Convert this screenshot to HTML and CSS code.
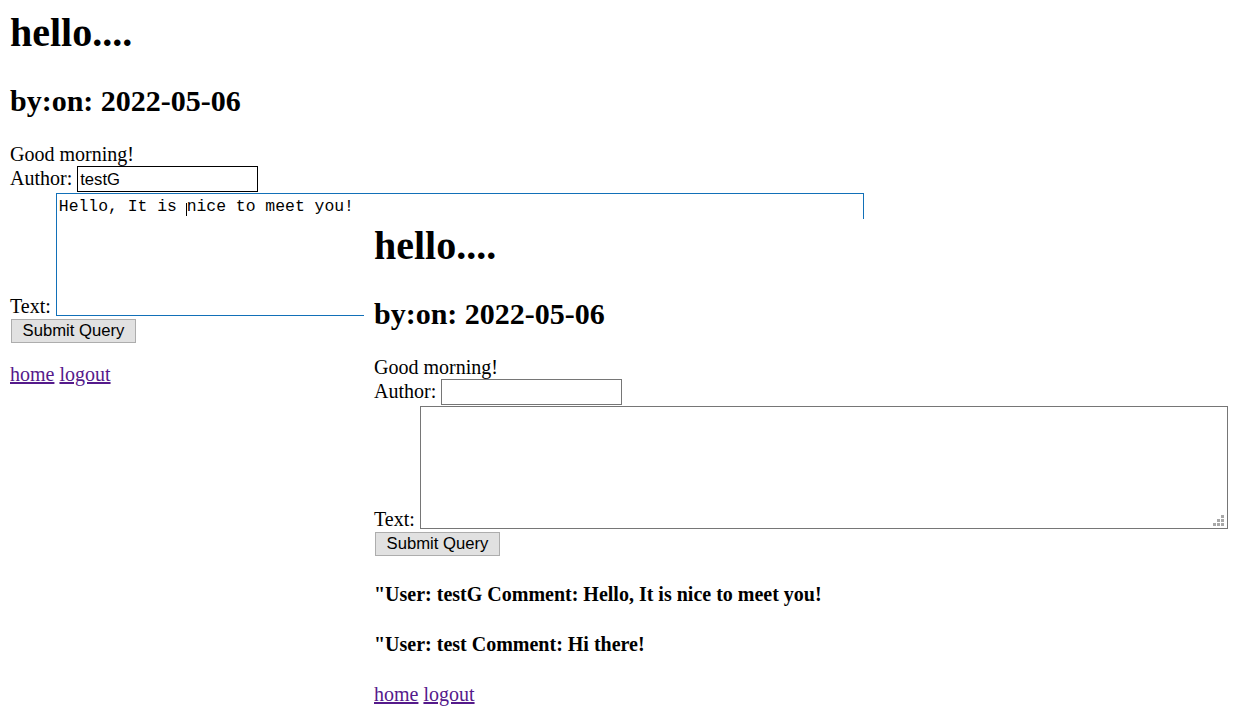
FILE: index.html
```html
<!DOCTYPE html>
<html>
<head>
<meta charset="utf-8">
<title>hello</title>
<link rel="stylesheet" href="styles.css">
</head>
<body>
<div class="win win-back">
  <div class="page page-back">
    <h1 class="title">hello....</h1>
    <h2 class="byline">by:on: 2022-05-06</h2>
    <form class="form">
      Good morning!<br>
      Author: <input class="field field-focus" type="text" value="testG"><br>
      Text: <span class="ta-wrap"><textarea class="area area-focus">Hello, It is nice to meet you!</textarea><span class="caret"></span></span><br>
      <button type="button" class="btn">Submit Query</button>
    </form>
    <p class="nav"><a href="#" class="link">home</a> <a href="#" class="link">logout</a></p>
  </div>
</div>
<div class="win win-front">
  <div class="page page-front">
    <h1 class="title">hello....</h1>
    <h2 class="byline">by:on: 2022-05-06</h2>
    <form class="form">
      Good morning!<br>
      Author: <input class="field" type="text" value=""><br>
      Text: <span class="ta-wrap"><textarea class="area"></textarea><svg class="grip" width="11" height="11" viewBox="0 0 11 11"><rect x="8" y="0" width="3" height="3"/><rect x="4" y="4" width="3" height="3"/><rect x="8" y="4" width="3" height="3"/><rect x="0" y="8" width="3" height="3"/><rect x="4" y="8" width="3" height="3"/><rect x="8" y="8" width="3" height="3"/></svg></span><br>
      <button type="button" class="btn">Submit Query</button>
    </form>
    <h4 class="comment">"User: testG Comment: Hello, It is nice to meet you!</h4>
    <h4 class="comment">"User: test Comment: Hi there!</h4>
    <p class="nav"><a href="#" class="link">home</a> <a href="#" class="link">logout</a></p>
  </div>
</div>
</body>
</html>
```
FILE: styles.css
```css
html, body {
  margin: 0;
  padding: 0;
  background: #fff;
}
body {
  position: relative;
  width: 1239px;
  height: 726px;
  overflow: hidden;
  font-family: "Liberation Serif", "Times New Roman", serif;
  font-size: 20px;
  line-height: 23px;
  color: #000;
}
.win {
  background: #fff;
  overflow: hidden;
  padding: 0 10px;
}
.win-back {
  height: 726px;
}
.win-front {
  position: absolute;
  left: 364px;
  top: 219px;
  right: 0;
  bottom: 0;
}
.page {
  display: flow-root;
}
.page-back {
  margin-top: -17px;
}
.page-front {
  margin-top: -23px;
}
.title {
  font-size: 40px;
  line-height: 46px;
  font-weight: bold;
  margin: 27px 0;
}
.byline {
  font-size: 30px;
  line-height: 35px;
  font-weight: bold;
  margin: 25px 0;
}
.form {
  margin: 0;
}
.field {
  box-sizing: border-box;
  width: 181px;
  height: 26px;
  margin: 0 0 1px;
  padding: 2px 2px 1px;
  border: 1px solid #767676;
  font-family: "Liberation Sans", Arial, sans-serif;
  font-size: 16.67px;
  color: #000;
  background: #fff;
  outline: none;
  vertical-align: baseline;
}
.field-focus {
  border-color: #000;
}
.ta-wrap {
  position: relative;
  display: inline-block;
  vertical-align: -3px;
}
.area {
  display: block;
  box-sizing: border-box;
  width: 808px;
  height: 123px;
  margin: 0;
  padding: 3px 2px 2px;
  border: 1px solid #767676;
  font-family: "Liberation Mono", "Courier New", monospace;
  font-size: 16.4px;
  line-height: normal;
  color: #000;
  background: #fff;
  resize: none;
  outline: none;
  appearance: none;
  -webkit-appearance: none;
  border-radius: 0;
}
.area.area-focus {
  border-color: #1270b8;
}
.caret {
  position: absolute;
  left: 130px;
  top: 10px;
  width: 1px;
  height: 13px;
  background: #000;
}
.grip {
  position: absolute;
  right: 4px;
  bottom: 3px;
  fill: #a8a8a8;
}
.btn {
  box-sizing: border-box;
  width: 125px;
  height: 24px;
  margin: 0 0 0 1px;
  padding: 0 8px;
  border: 1px solid #adadad;
  background: #e1e1e1;
  color: #000;
  font-family: "Liberation Sans", Arial, sans-serif;
  font-size: 16.67px;
  line-height: 20px;
}
.comment {
  font-size: 20px;
  font-weight: bold;
  margin: 27px 0;
}
.nav {
  margin: 20px 0;
}
.link {
  color: #551a8b;
  text-decoration: underline;
}
```
